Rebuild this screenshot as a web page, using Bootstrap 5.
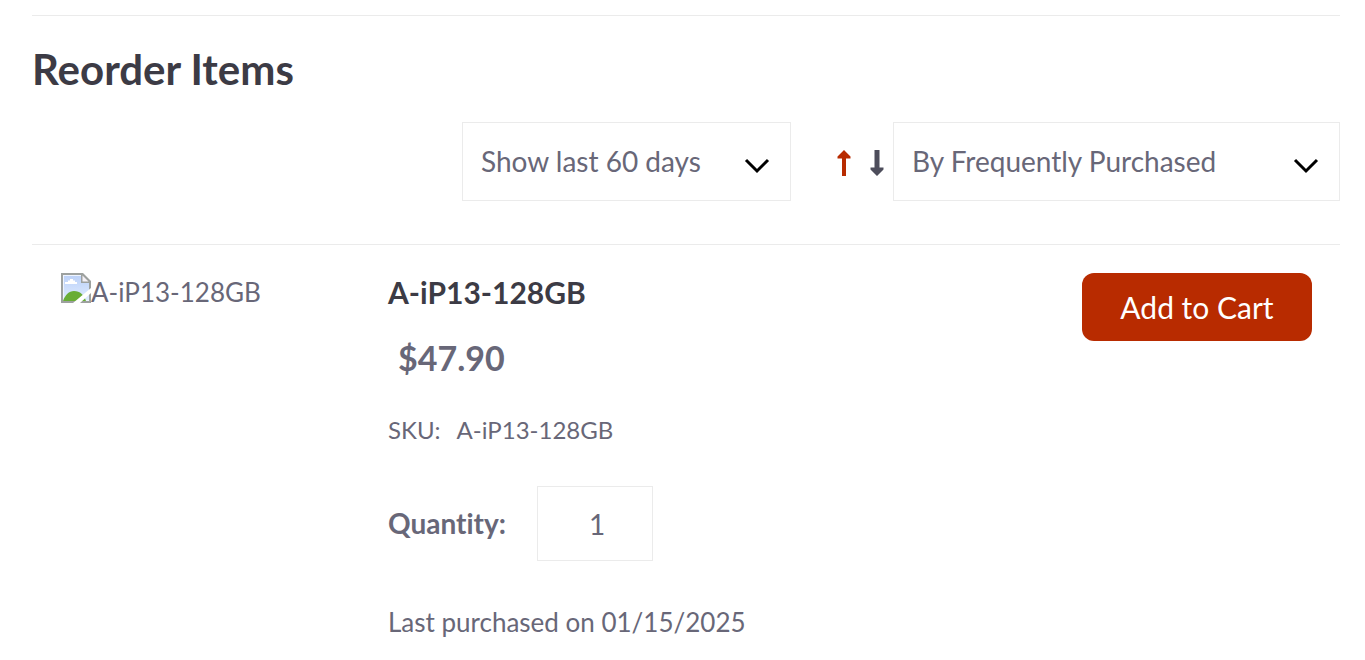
<!DOCTYPE html>
<html lang="en">
<head>
<meta charset="utf-8">
<meta name="viewport" content="width=device-width, initial-scale=1">
<title>Reorder Items</title>
<link href="https://cdn.jsdelivr.net/npm/bootstrap@5.3.0/dist/css/bootstrap.min.css" rel="stylesheet">
<style>
  body { font-family: Lato, sans-serif; font-size: 26px; line-height: 40px; font-variant-ligatures: none; color: #686778; background: #fff; }
  .reorder { padding: 15px 25px 12px 32px; }
  .reorder-head { border-top: 1px solid #ebebeb; padding-top: 28px; }
  .reorder-title { font-size: 42px; line-height: 50px; font-weight: 700; color: #3c3b45; margin: 0 0 28px; }
  .reorder-select { width: auto; height: 79px; font-size: 28px; line-height: 40px; color: #686778; border: 1px solid #ebebeb; border-radius: 0; padding: 0 80px 2px 18px;
    background-image: url("data:image/svg+xml,%3Csvg xmlns='http://www.w3.org/2000/svg' viewBox='0 0 26 16'%3E%3Cpath d='M2 2l11 11L24 2' fill='none' stroke='%23000' stroke-width='3'/%3E%3C/svg%3E");
    background-size: 26px 16px; background-position: right 20px top 35px; }
  .period { flex: 0 0 329px; margin-right: 43px; }
  .ordering { flex: 0 0 447px; }
  .sort-btn { width: 20px; margin: 2px 13px 0 0; color: #4d4d5b; }
  .sort-btn:last-of-type { margin-right: 6px; }
  .sort-btn.active { color: #b82b00; }
  .item-row { --bs-gutter-x: 58px; border-top: 1px solid #ebebeb; margin: 43px 0 0; padding-top: 28px; }
  .row > .cart-col { padding-right: 28px; }
  .thumb-alt { line-height: 38px; }
  .item-name { font-size: 30px; line-height: 38px; font-weight: 700; color: #3c3b45; }
  .item-price { font-size: 34px; line-height: 48px; margin: 23px 0 0 10px; }
  .item-sku { font-size: 24px; line-height: 40px; margin-top: 28px; }
  .item-qty { margin-top: 36px; }
  .item-qty label { font-size: 28px; width: 149px; padding-bottom: 2px; }
  .item-qty input { width: 116px; height: 75px; font-size: 28px; color: #686778; border: 1px solid #ebebeb; border-radius: 0; padding: 0 0 0 4px; }
  .item-last { margin-top: 41px; }
  .cart-btn { min-width: 230px; height: 68px; font-size: 30px; line-height: 40px; border-radius: 12px; color: #fff; background: #b82b00; padding: 0 24px; white-space: nowrap; }
  .cart-btn:hover { color: #fff; background: #9c2400; }
</style>
</head>
<body>
<main class="reorder">
  <header class="reorder-head">
    <h1 class="reorder-title">Reorder Items</h1>
    <div class="d-flex flex-wrap justify-content-end align-items-center">
      <select class="form-select reorder-select period" aria-label="Period"><option>Show last 60 days</option></select>
      <button type="button" class="btn p-0 border-0 sort-btn active" aria-label="Ascending"><svg class="d-block mx-auto" width="14" height="26" viewBox="0 0 14 26" fill="currentColor"><path d="M7 0l6.500 6.500v2H9V26H5V8.500H.5v-2z"/></svg></button>
      <button type="button" class="btn p-0 border-0 sort-btn" aria-label="Descending"><svg class="d-block mx-auto" width="14" height="26" viewBox="0 0 14 26" fill="currentColor"><path d="M7 26l6.500-6.500v-2H9.500V0h-5v17.500H.5v2z"/></svg></button>
      <select class="form-select reorder-select ordering" aria-label="Sort by"><option>By Frequently Purchased</option></select>
    </div>
  </header>
  <article class="row item-row">
    <div class="col-3">
      <div class="d-flex text-nowrap thumb-alt">
        <svg class="flex-shrink-0" width="30" height="30" viewBox="0 0 30 30" role="img" aria-label="Missing image">
          <defs><linearGradient id="sky" x1="0" y1="0" x2="0" y2="1"><stop offset="0" stop-color="#bdd2f8"/><stop offset="1" stop-color="#deebff"/></linearGradient></defs>
          <path d="M0 0h22l8 8v22H0z" fill="#9da19f"/>
          <path d="M2 2h18v8h8v18H2z" fill="#eef4ff"/>
          <path d="M3 3h17v7h8v17H3z" fill="url(#sky)"/>
          <path d="M4 11h12V9h-2V7.500h-2V6H9v1.500H7V9H4z" fill="#fff"/>
          <path d="M2 28c2-6 6-10 11-10 6 0 10 4 12 10z" fill="#68ad36"/>
          <path d="M21.500 2.500l6 6h-6z" fill="#f5f1f7"/>
          <path d="M12 30L30 15v5L19 30z" fill="#fff"/>
        </svg>
        <span>A-iP13-128GB</span>
      </div>
    </div>
    <div class="col-6">
      <h2 class="item-name m-0">A-iP13-128GB</h2>
      <div class="item-price fw-bold">$47.90</div>
      <div class="item-sku d-flex gap-3"><span>SKU:</span><span>A-iP13-128GB</span></div>
      <div class="item-qty d-flex align-items-center">
        <label class="fw-bold" for="qty">Quantity:</label>
        <input class="form-control text-center" id="qty" type="text" inputmode="numeric" value="1">
      </div>
      <div class="item-last">Last purchased on 01/15/2025</div>
    </div>
    <div class="col-3 cart-col d-flex justify-content-end align-items-start">
      <button type="button" class="btn cart-btn">Add to Cart</button>
    </div>
  </article>
</main>
<script src="https://cdn.jsdelivr.net/npm/bootstrap@5.3.0/dist/js/bootstrap.bundle.min.js"></script>
</body>
</html>
